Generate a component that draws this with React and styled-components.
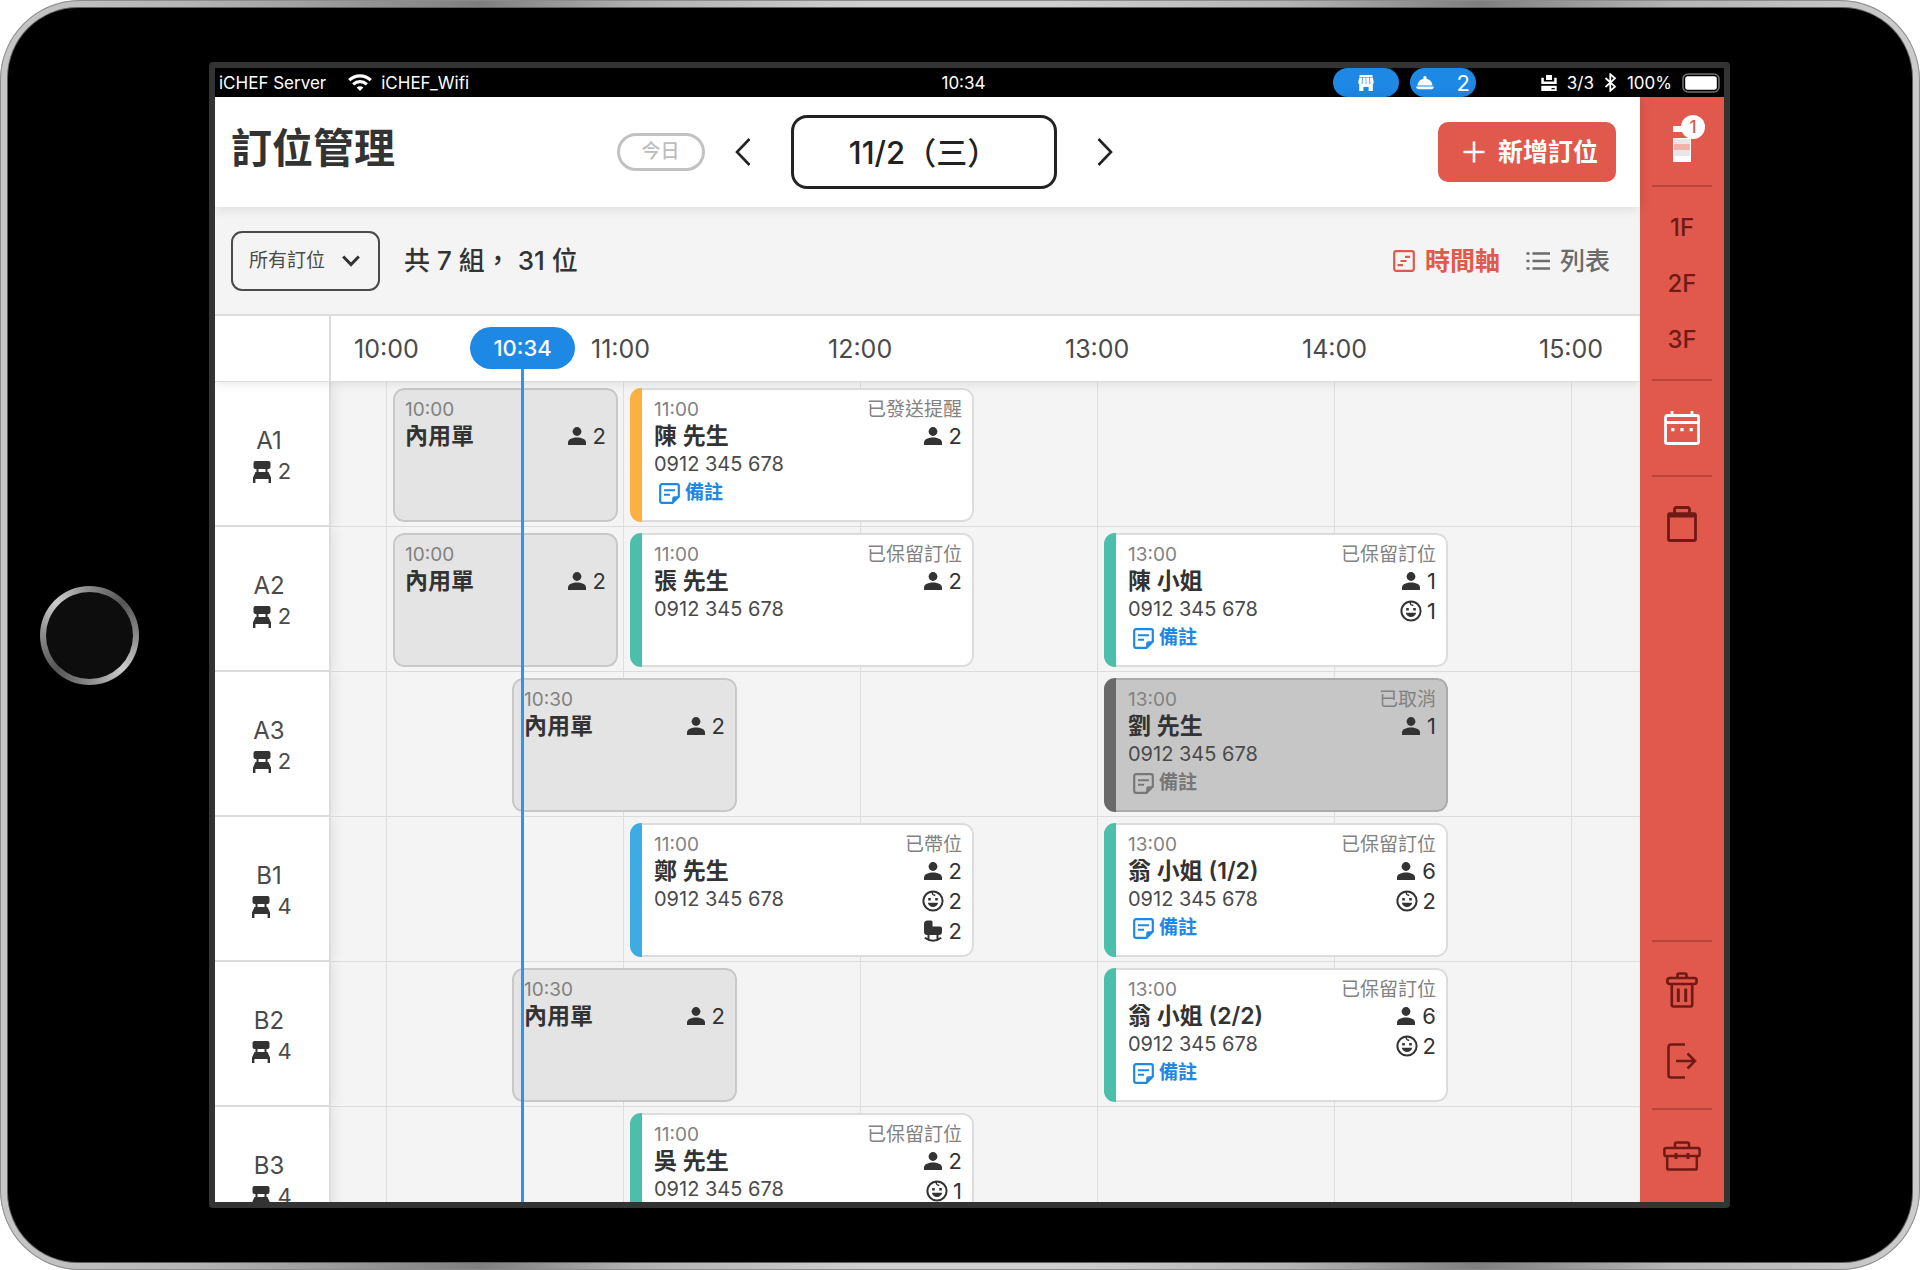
import React from "react";
import styled, { createGlobalStyle } from "styled-components";

const color = {
  ink: "#333333",
  soft: "#828282",
  line: "#dcdcdc",
  ground: "#f4f4f4",
  red: "#e1594c",
  redDark: "#701a14",
  redLine: "#b9453a",
  blue: "#1e88e5",
};

const GlobalStyle = createGlobalStyle`
  *, *::before, *::after { box-sizing: border-box; }
  body {
    margin: 0;
    background: #ffffff;
    color: ${color.ink};
    font-family: Inter, "Noto Sans CJK TC", sans-serif;
  }
  button, select { font-family: inherit; color: inherit; margin: 0; }
  button { background: none; border: 0; padding: 0; cursor: pointer; }
  h1, p { margin: 0; }
  svg { display: block; flex: none; }
`;

/* ---------- device ---------- */

const Device = styled.div`
  height: 100vh;
  padding: 8px;
  border-radius: 80px;
  background: linear-gradient(90deg, #c6c6c6 0%, #b4b4b4 10%, #7f7f7f 25%, #b0b0b0 33%, #cfcfcf 45%, #cfcfcf 55%, #b4b4b4 67%, #7f7f7f 77%, #b4b4b4 87%, #cccccc 100%);
  box-shadow: inset 0 0 0 1px #8c8c8c;
`;

const Bezel = styled.div`
  height: 100%;
  display: flex;
  align-items: center;
  padding: 54px 182px 54px 32px;
  border-radius: 70px;
  background: #000000;
  box-shadow: 0 0 0 1px #5f5f5f;
`;

const HomeSlot = styled.div`
  flex: none;
  width: 169px;
`;

const HomeButton = styled.button`
  display: block;
  width: 99px;
  height: 99px;
  border-radius: 50%;
  padding: 6px;
  background: conic-gradient(#8a8a8a, #555555 45deg, #8a8a8a 90deg, #cccccc 135deg, #8a8a8a 180deg, #555555 225deg, #8a8a8a 270deg, #cccccc 315deg, #8a8a8a);
  &::before {
    content: "";
    display: block;
    height: 100%;
    border-radius: 50%;
    background: #0d0d0d;
  }
`;

const Screen = styled.div`
  flex: 1;
  min-width: 0;
  height: 100%;
  display: flex;
  flex-direction: column;
  overflow: hidden;
  border: 6px solid #333333;
  border-radius: 4px;
  background: #000000;
`;

/* ---------- status bar ---------- */

const StatusBar = styled.div`
  flex: none;
  height: 29px;
  display: grid;
  grid-template-columns: 1fr auto 1fr;
  align-items: center;
  padding: 0 4px;
  color: #ffffff;
  font-size: 17px;
  line-height: 28px;
`;

const StatusGroup = styled.div`
  display: flex;
  align-items: center;
  height: 100%;
  gap: ${(p) => p.$gap}px;
  justify-content: ${(p) => (p.$end ? "flex-end" : "flex-start")};
`;

const Clock = styled.time`
  padding-right: 12px;
`;

const StatusPill = styled.button`
  width: 66px;
  height: 29px;
  border-radius: 15px;
  padding: 0 6px;
  display: flex;
  align-items: center;
  justify-content: ${(p) => (p.$spread ? "space-between" : "center")};
  background: ${color.blue};
  font-size: 22px;
  color: #ffffff;
`;

const StatusInfo = styled.div`
  display: flex;
  align-items: center;
  gap: 10px;
  margin-left: 54px;
`;

/* ---------- application frame ---------- */

const Workspace = styled.div`
  flex: 1;
  min-height: 0;
  display: flex;
`;

const Main = styled.main`
  flex: 1;
  min-width: 0;
  display: flex;
  flex-direction: column;
  background: ${color.ground};
`;

const Header = styled.header`
  flex: none;
  height: 110px;
  display: grid;
  grid-template-columns: 1fr auto 1fr;
  align-items: center;
  padding: 0 24px 0 16px;
  background: #ffffff;
  box-shadow: 0 1px 12px rgba(0, 0, 0, 0.12);
  z-index: 1;
`;

const TitleSide = styled.div`
  display: flex;
  align-items: center;
  justify-content: space-between;
  padding-right: 30px;
`;

const Title = styled.h1`
  font-size: 41px;
  line-height: 60px;
  font-weight: 700;
  padding-bottom: 8px;
`;

const TodayButton = styled.button`
  width: 88px;
  height: 38px;
  border: 3px solid #c2c2c2;
  border-radius: 19px;
  font-size: 19px;
  font-weight: 500;
  line-height: 32px;
  color: #bdbdbd;
`;

const DateNav = styled.div`
  display: flex;
  align-items: center;
  gap: 40px;
`;

const DateButton = styled.button`
  width: 266px;
  height: 74px;
  padding-bottom: 4px;
  border: 3px solid #222222;
  border-radius: 16px;
  font-size: 31px;
  font-weight: 500;
  color: #222222;
`;

const AddButton = styled.button`
  justify-self: end;
  height: 60px;
  padding: 0 18px 4px 25px;
  display: flex;
  align-items: center;
  gap: 13px;
  border-radius: 10px;
  background: ${color.red};
  color: #ffffff;
  font-size: 25px;
  font-weight: 700;
  svg { margin-top: 4px; }
`;

const Toolbar = styled.div`
  flex: none;
  height: 109px;
  display: flex;
  align-items: center;
  padding: 0 30px 0 16px;
  border-bottom: 2px solid ${color.line};
`;

const Filter = styled.label`
  position: relative;
  display: block;
  svg {
    position: absolute;
    right: 20px;
    top: 24px;
    pointer-events: none;
  }
`;

const FilterSelect = styled.select`
  appearance: none;
  display: block;
  width: 149px;
  height: 60px;
  padding: 0 44px 0 16px;
  border: 2px solid #4a4a4a;
  border-radius: 11px;
  background: transparent;
  font-size: 19px;
  color: #4a4a4a;
`;

const Summary = styled.p`
  margin-left: 24px;
  flex: 1;
  font-size: 26px;
  line-height: 36px;
  font-weight: 500;
`;

const Views = styled.div`
  display: flex;
  gap: 26px;
`;

const ViewButton = styled.button`
  display: flex;
  align-items: center;
  gap: 10px;
  font-size: 25px;
  line-height: 36px;
  font-weight: ${(p) => (p.$active ? 700 : 500)};
  color: ${(p) => (p.$active ? color.red : "#6b6b6b")};
`;

/* ---------- schedule ---------- */

const Schedule = styled.section`
  position: relative;
  flex: 1;
  min-height: 0;
  display: flex;
  flex-direction: column;
  overflow: hidden;
`;

const Hours = styled.div`
  flex: none;
  height: 66px;
  display: flex;
  background: #ffffff;
  border-bottom: 1px solid ${color.line};
  box-shadow: 0 1px 10px rgba(0, 0, 0, 0.1);
  z-index: 2;
`;

const HoursCorner = styled.div`
  flex: none;
  width: 116px;
  border-right: 2px solid ${color.line};
`;

const HoursTrack = styled.div`
  display: grid;
  grid-auto-flow: column;
  grid-auto-columns: 237px;
  align-items: center;
  padding-left: 23px;
  font-size: 25px;
  color: #4a4a4a;
`;

const Board = styled.div`
  flex: 1;
  min-height: 0;
  overflow: hidden;
`;

const Row = styled.div`
  height: 145px;
  display: flex;
`;

const TableCell = styled.div`
  flex: none;
  width: 116px;
  padding: 5px 6px 0 0;
  display: flex;
  flex-direction: column;
  align-items: center;
  justify-content: center;
  border-right: 2px solid ${color.line};
  border-bottom: 2px solid ${color.line};
  background: #ffffff;
  box-shadow: 1px 0 14px rgba(0, 0, 0, 0.1);
  clip-path: inset(0 -20px 0 0);
  font-size: 24px;
  line-height: 31px;
  color: #4a4a4a;
`;

const Seats = styled.div`
  display: flex;
  align-items: center;
  gap: 7px;
  padding-left: 6px;
  font-size: 22px;
`;

const Lane = styled.div`
  flex: 1;
  min-width: 0;
  overflow: hidden;
  display: grid;
  grid-template-columns: 55px repeat(10, 119px 118px);
  padding: 6px 0 4px;
  border-bottom: 1px solid ${color.line};
  background: linear-gradient(90deg, #dedede 1px, transparent 1px) 55px 0 / 237px 100%;
`;

const Card = styled.article`
  grid-row: 1;
  grid-column: ${(p) => p.$from} / span ${(p) => p.$span};
  margin: 0 5px 0 7px;
  height: 134px;
  display: flex;
  overflow: hidden;
  border-radius: 11px;
`;

const Accent = styled.div`
  flex: none;
  width: 12px;
  background: ${(p) => p.$color};
`;

const CardBody = styled.div`
  flex: 1;
  min-width: 0;
  display: flex;
  justify-content: space-between;
  padding: 6px 10px 0;
  border: 2px solid ${(p) => p.$edge};
  ${(p) => p.$accented && "border-left: 0; padding-left: 12px;"}
  border-radius: ${(p) => (p.$accented ? "0 11px 11px 0" : "11px")};
  background: ${(p) => p.$fill};
`;

const Column = styled.div`
  display: flex;
  flex-direction: column;
  align-items: ${(p) => (p.$end ? "flex-end" : "flex-start")};
  white-space: nowrap;
`;

const Start = styled.time`
  font-size: 19px;
  line-height: 27px;
  color: ${color.soft};
`;

const Status = styled.span`
  height: 25px;
  font-size: 19px;
  line-height: 27px;
  color: ${color.soft};
`;

const Guest = styled.span`
  font-size: 23px;
  line-height: 26px;
  font-weight: 600;
`;

const Phone = styled.span`
  font-size: 20px;
  line-height: 31px;
  color: #4a4a4a;
`;

const Note = styled.button`
  display: flex;
  align-items: center;
  gap: 5px;
  margin-left: 5px;
  font-size: 19px;
  line-height: 26px;
  font-weight: 700;
  color: ${(p) => (p.$muted ? "#777777" : color.blue)};
`;

const Count = styled.span`
  display: flex;
  align-items: center;
  gap: 5px;
  font-size: 22px;
  line-height: 30px;
`;

const NowMarker = styled.div`
  position: absolute;
  top: 11px;
  bottom: 0;
  left: 255px;
  width: 105px;
  display: flex;
  flex-direction: column;
  align-items: center;
  pointer-events: none;
  z-index: 3;
  &::after {
    content: "";
    flex: 1;
    width: 3px;
    background: #2f95ec;
  }
`;

const NowPill = styled.time`
  align-self: stretch;
  border-radius: 21px;
  background: ${color.blue};
  color: #ffffff;
  text-align: center;
  font-size: 22px;
  line-height: 42px;
  font-weight: 500;
`;

/* ---------- side rail ---------- */

const Rail = styled.nav`
  flex: none;
  width: 84px;
  display: flex;
  flex-direction: column;
  align-items: center;
  background: ${color.red};
`;

const RailSection = styled.div`
  width: 60px;
  display: flex;
  flex-direction: column;
  align-items: center;
  padding: ${(p) => p.$pad || 0}px 0;
  margin-top: ${(p) => (p.$push ? "auto" : 0)};
  border-top: ${(p) => (p.$line ? `2px solid ${color.redLine}` : "0")};
`;

const RailButton = styled.button`
  width: 60px;
  height: ${(p) => p.$height}px;
  display: flex;
  align-items: center;
  justify-content: center;
  color: ${(p) => (p.$active ? "#ffffff" : color.redDark)};
  font-size: 24px;
  font-weight: 500;
`;

const BadgeHost = styled.span`
  position: relative;
  display: block;
`;

const Badge = styled.span`
  position: absolute;
  top: -5px;
  left: 8px;
  width: 24px;
  height: 24px;
  border-radius: 50%;
  background: #ffffff;
  color: ${color.red};
  font-size: 17px;
  line-height: 24px;
  text-align: center;
`;

/* ---------- icons ---------- */

const Wifi = () => (
  <svg width="24" height="17" viewBox="0 0 24 17" fill="none" stroke="#fff" strokeWidth="3.2">
    <path d="M1.2 6.2C7.3.4 16.7.4 22.8 6.2" />
    <path d="M5.2 10.4c3.9-3.6 9.7-3.6 13.6 0" />
    <path d="M12 17l-3.4-3.6c1.9-1.7 4.9-1.7 6.8 0z" fill="#fff" stroke="none" />
  </svg>
);

const Store = () => (
  <svg width="16" height="16" viewBox="0 0 16 16" fill="#fff">
    <path d="M1.5 0h13v2h-13z" />
    <path d="M1.2 2.6h3L3.8 7.4a1.7 1.7 0 0 1-3.6 0zM4.9 2.6h2.8v4.8a1.6 1.6 0 0 1-3.2 0zM8.3 2.6h2.8l.4 4.8a1.6 1.6 0 0 1-3.2 0zM11.8 2.6h3l1 4.8a1.7 1.7 0 0 1-3.6 0z" />
    <path d="M1.2 8.500h13.600V16h-4.200v-4H5.400v4H1.200z" />
  </svg>
);

const Dish = () => (
  <svg width="18" height="14" viewBox="0 0 18 14" fill="#fff">
    <circle cx="9" cy="1.7" r="1.7" />
    <path d="M1.5 9.6C1.8 5.500 5 2.800 9 2.800s7.200 2.700 7.500 6.800zM.2 10.600h17.600c0 1.700-1 2.700-2.600 2.700H2.800C1.200 13.300.2 12.300.2 10.600z" />
  </svg>
);

const Printer = () => (
  <svg width="16" height="16" viewBox="0 0 16 16" fill="#fff">
    <path d="M5 0h6v5H5z" />
    <path d="M.3 2.800h2.500v3.700h10.400V2.800h2.500V9H.3z" />
    <path d="M.3 10.800h15.400V16H.3zM10.500 13v1.200h3.200V13z" fillRule="evenodd" />
  </svg>
);

const Bluetooth = () => (
  <svg width="13" height="19" viewBox="0 0 13 19" fill="none" stroke="#fff" strokeWidth="1.8">
    <path d="M1.500 5l9.500 8.700-4.700 4V1.300l4.700 4L1.500 14" />
  </svg>
);

const Battery = () => (
  <svg width="38" height="20" viewBox="0 0 38 20">
    <rect x="1" y="1" width="36" height="18" rx="5" fill="#000" stroke="#6f6f6f" strokeWidth="1.600" />
    <rect x="3.200" y="3.200" width="31.600" height="13.600" rx="2.500" fill="#fff" />
  </svg>
);

const Arrow = ({ flip }) => (
  <svg width="16" height="28" viewBox="0 0 16 28" fill="none" stroke="#222" strokeWidth="2.600">
    <path d={flip ? "M1.500 1l12.500 13-12.500 13" : "M14.500 1L2 14l12.500 13"} />
  </svg>
);

const Plus = () => (
  <svg width="22" height="22" viewBox="0 0 22 22" stroke="#fff" strokeWidth="2.600">
    <path d="M11 .5v21M.5 11h21" />
  </svg>
);

const Caret = () => (
  <svg width="18" height="12" viewBox="0 0 18 12" fill="none" stroke="#333" strokeWidth="3">
    <path d="M1.200 1.500L9 9.500l7.800-8" />
  </svg>
);

const TimelineIcon = () => (
  <svg width="22" height="22" viewBox="0 0 22 22" fill="none" stroke="currentColor" strokeWidth="2.200">
    <rect x="1.200" y="1.200" width="19.600" height="19.600" rx="2" />
    <path d="M12 6.800h5M7.500 11h6M4.500 15.200h5.500" />
  </svg>
);

const ListIcon = () => (
  <svg width="24" height="20" viewBox="0 0 24 20" stroke="currentColor" strokeWidth="2.400">
    <path d="M6.500 2.500H24M6.500 10H24M6.500 17.500H24M.5 2.500h3M.5 10h3M.5 17.500h3" />
  </svg>
);

const Chair = () => (
  <svg width="18" height="22" viewBox="0 0 18 22" fill={color.ink}>
    <path d="M2.500 0h13A2 2 0 0 1 17.500 2v4A2 2 0 0 1 15.500 8h-13A2 2 0 0 1 .5 6V2A2 2 0 0 1 2.500 0z" />
    <path d="M3.500 7.500h2V12h-2zM12.500 7.500h2V12h-2z" />
    <path d="M2.500 11h13l2.500 5.500V22h-2.400v-4H2.400v4H0v-5.500z" />
  </svg>
);

const Person = () => (
  <svg width="22" height="22" viewBox="0 0 22 22" fill={color.ink}>
    <circle cx="11" cy="6.500" r="4.400" />
    <path d="M2 20v-2.600c0-3.400 5-4.900 9-4.900s9 1.500 9 4.900V20z" />
  </svg>
);

const Child = () => (
  <svg width="22" height="22" viewBox="0 0 22 22" fill="none" stroke={color.ink} strokeWidth="2">
    <circle cx="11" cy="11" r="9.600" />
    <path d="M10.500 1.500c-.8 2.400.6 4 2.800 3.600" strokeWidth="1.500" />
    <path d="M6.200 9.200h2.600M13.200 9.200h2.600" strokeWidth="2.400" />
    <path d="M5.800 12.800h10.400c-.6 2.700-2.600 4.200-5.200 4.200s-4.600-1.500-5.200-4.200z" fill={color.ink} stroke="none" />
  </svg>
);

const Pram = () => (
  <svg width="22" height="22" viewBox="0 0 22 22" fill={color.ink}>
    <path d="M2 4a3.500 3.500 0 0 1 3.500-3.500H9A1.500 1.500 0 0 1 10.500 2v4.500H18A2 2 0 0 1 20 8.500V12a3 3 0 0 1-3 3H5a3 3 0 0 1-3-3z" />
    <path d="M6.500 14v5M15.500 14v5M2.800 17.800c4.800 3.800 11.600 3.800 16.400 0" fill="none" stroke={color.ink} strokeWidth="2" />
  </svg>
);

const NoteIcon = () => (
  <svg width="21" height="21" viewBox="0 0 21 21" fill="none" stroke="currentColor" strokeWidth="2.200">
    <path d="M3 1.200h15a1.800 1.800 0 0 1 1.800 1.800v10.500l-6.300 6.300H3A1.800 1.800 0 0 1 1.200 18V3A1.800 1.800 0 0 1 3 1.200z" />
    <path d="M13.200 20v-4.500a2.300 2.300 0 0 1 2.300-2.300H20z" fill="currentColor" stroke="none" />
    <path d="M5 7.300h11M5 11.800h6" strokeWidth="2" />
  </svg>
);

const Bottle = () => (
  <svg width="18" height="42" viewBox="0 0 18 42">
    <path d="M0 6h18v6H0zM0 18h18v24H0z" fill="#fff" />
    <path d="M1 19h16v17H1z" fill="#e8e6e6" />
    <path d="M1 24h16v6H1z" fill="#efb3ab" />
  </svg>
);

const CalendarIcon = () => (
  <svg width="36" height="34" viewBox="0 0 36 34" fill="none" stroke="currentColor" strokeWidth="2.800">
    <rect x="1.500" y="4.500" width="33" height="28" rx="1.800" />
    <path d="M1.500 11.500h33M8 0v5M28 0v5" />
    <path d="M7.200 18.600h3.200M16.400 18.600h3.200M25.600 18.600h3.200" strokeWidth="3.200" />
  </svg>
);

const Bag = () => (
  <svg width="30" height="36" viewBox="0 0 30 36" fill="none" stroke="currentColor" strokeWidth="2.800">
    <path d="M7.500 7V3.200a1.700 1.700 0 0 1 1.700-1.700h11.600a1.700 1.700 0 0 1 1.700 1.700V7" />
    <rect x="1.500" y="8" width="27" height="26.500" rx="1" />
    <path d="M1.500 9h27" strokeWidth="5" />
  </svg>
);

const Trash = () => (
  <svg width="32" height="36" viewBox="0 0 32 36" fill="none" stroke="currentColor" strokeWidth="2.700">
    <rect x="1.400" y="6" width="29.200" height="6" rx="2.400" />
    <path d="M11.500 6V3a1.500 1.500 0 0 1 1.500-1.500h6A1.500 1.500 0 0 1 20.500 3v3" />
    <path d="M5.800 12v20.800A1.700 1.700 0 0 0 7.500 34.500h17a1.700 1.700 0 0 0 1.700-1.700V12" />
    <path d="M12.300 16.500V30M19.700 16.500V30" strokeWidth="3" />
  </svg>
);

const Exit = () => (
  <svg width="30" height="36" viewBox="0 0 30 36" fill="none" stroke="currentColor" strokeWidth="2.500">
    <path d="M18 1.500H4A2.500 2.500 0 0 0 1.500 4v28A2.500 2.500 0 0 0 4 34.500h14" />
    <path d="M9 18h19M20.500 10.500L28 18l-7.500 7.500" />
  </svg>
);

const Toolbox = () => (
  <svg width="38" height="30" viewBox="0 0 38 30" fill="none" stroke="currentColor" strokeWidth="2.500">
    <path d="M12 7V3a1.600 1.600 0 0 1 1.600-1.600h10.800A1.600 1.600 0 0 1 26 3v4" />
    <rect x="1.400" y="7" width="35.200" height="8" rx="1.600" />
    <path d="M4.200 15v12a1.600 1.600 0 0 0 1.600 1.600h26.400a1.600 1.600 0 0 0 1.600-1.600V15" />
    <path d="M13 12v6M25 12v6" strokeWidth="3" />
  </svg>
);

/* ---------- data ---------- */

const KINDS = {
  dineIn: { fill: "#e4e4e4", edge: "#c8c8c8" },
  reminded: { accent: "#fbb042", status: "已發送提醒", fill: "#ffffff", edge: color.line },
  reserved: { accent: "#4bbfa9", status: "已保留訂位", fill: "#ffffff", edge: color.line },
  seated: { accent: "#3fabe3", status: "已帶位", fill: "#ffffff", edge: color.line },
  cancelled: { accent: "#6a6a6a", status: "已取消", fill: "#c6c6c6", edge: "#ababab" },
};

const PHONE = "0912 345 678";

const TABLES = [
  { name: "A1", seats: 2, cards: [
    { kind: "dineIn", time: "10:00", guest: "內用單", people: 2 },
    { kind: "reminded", time: "11:00", guest: "陳 先生", phone: PHONE, note: true, people: 2 },
  ] },
  { name: "A2", seats: 2, cards: [
    { kind: "dineIn", time: "10:00", guest: "內用單", people: 2 },
    { kind: "reserved", time: "11:00", guest: "張 先生", phone: PHONE, people: 2 },
    { kind: "reserved", time: "13:00", guest: "陳 小姐", phone: PHONE, note: true, people: 1, children: 1 },
  ] },
  { name: "A3", seats: 2, cards: [
    { kind: "dineIn", time: "10:30", guest: "內用單", people: 2 },
    { kind: "cancelled", time: "13:00", guest: "劉 先生", phone: PHONE, note: true, people: 1 },
  ] },
  { name: "B1", seats: 4, cards: [
    { kind: "seated", time: "11:00", guest: "鄭 先生", phone: PHONE, people: 2, children: 2, prams: 2 },
    { kind: "reserved", time: "13:00", guest: "翁 小姐 (1/2)", phone: PHONE, note: true, people: 6, children: 2 },
  ] },
  { name: "B2", seats: 4, cards: [
    { kind: "dineIn", time: "10:30", guest: "內用單", people: 2 },
    { kind: "reserved", time: "13:00", guest: "翁 小姐 (2/2)", phone: PHONE, note: true, people: 6, children: 2 },
  ] },
  { name: "B3", seats: 4, cards: [
    { kind: "reserved", time: "11:00", guest: "吳 先生", phone: PHONE, people: 2, children: 1 },
  ] },
];

const HOURS = ["10:00", "11:00", "12:00", "13:00", "14:00", "15:00"];

// Lanes are divided into half hours; the first grid column is the lead-in before 10:00.
const halfHourColumn = (time) => {
  const [h, m] = time.split(":").map(Number);
  return 2 + (h - 10) * 2 + m / 30;
};

function Booking({ kind, time, guest, phone, note, people, children, prams }) {
  const k = KINDS[kind];
  const accented = Boolean(k.accent);
  return (
    <Card $from={halfHourColumn(time)} $span={accented ? 3 : 2}>
      {accented && <Accent $color={k.accent} />}
      <CardBody $accented={accented} $fill={k.fill} $edge={k.edge}>
        <Column>
          <Start>{time}</Start>
          <Guest>{guest}</Guest>
          {phone && <Phone>{phone}</Phone>}
          {note && <Note type="button" $muted={kind === "cancelled"}><NoteIcon />備註</Note>}
        </Column>
        <Column $end>
          <Status>{k.status}</Status>
          <Count><Person />{people}</Count>
          {children && <Count><Child />{children}</Count>}
          {prams && <Count><Pram />{prams}</Count>}
        </Column>
      </CardBody>
    </Card>
  );
}

export default function App() {
  return (
    <Device lang="zh-Hant">
      <GlobalStyle />
      <Bezel>
        <HomeSlot>
          <HomeButton type="button" aria-label="Home" />
        </HomeSlot>
        <Screen>
          <StatusBar>
            <StatusGroup $gap={22}>
              <span>iCHEF Server</span>
              <StatusGroup $gap={9}><Wifi /><span>iCHEF_Wifi</span></StatusGroup>
            </StatusGroup>
            <Clock>10:34</Clock>
            <StatusGroup $gap={11} $end>
              <StatusPill type="button" aria-label="店面"><Store /></StatusPill>
              <StatusPill type="button" $spread><Dish />2</StatusPill>
              <StatusInfo>
                <Printer /><span>3/3</span>
                <Bluetooth /><span>100%</span>
                <Battery />
              </StatusInfo>
            </StatusGroup>
          </StatusBar>
          <Workspace>
            <Main>
              <Header>
                <TitleSide>
                  <Title>訂位管理</Title>
                  <TodayButton type="button">今日</TodayButton>
                </TitleSide>
                <DateNav>
                  <button type="button" aria-label="前一天"><Arrow /></button>
                  <DateButton type="button">11/2（三）</DateButton>
                  <button type="button" aria-label="後一天"><Arrow flip /></button>
                </DateNav>
                <AddButton type="button"><Plus />新增訂位</AddButton>
              </Header>
              <Toolbar>
                <Filter>
                  <FilterSelect aria-label="訂位篩選" defaultValue="all">
                    <option value="all">所有訂位</option>
                  </FilterSelect>
                  <Caret />
                </Filter>
                <Summary>共 7 組， 31 位</Summary>
                <Views>
                  <ViewButton type="button" $active><TimelineIcon />時間軸</ViewButton>
                  <ViewButton type="button"><ListIcon />列表</ViewButton>
                </Views>
              </Toolbar>
              <Schedule>
                <Hours>
                  <HoursCorner />
                  <HoursTrack>
                    {HOURS.map((h) => <time key={h}>{h}</time>)}
                  </HoursTrack>
                </Hours>
                <Board>
                  {TABLES.map((t) => (
                    <Row key={t.name}>
                      <TableCell>
                        <span>{t.name}</span>
                        <Seats><Chair />{t.seats}</Seats>
                      </TableCell>
                      <Lane>
                        {t.cards.map((c) => <Booking key={c.time} {...c} />)}
                      </Lane>
                    </Row>
                  ))}
                </Board>
                <NowMarker><NowPill>10:34</NowPill></NowMarker>
              </Schedule>
            </Main>
            <Rail>
              <RailSection>
                <RailButton type="button" $height={88} $active aria-label="點餐">
                  <BadgeHost><Bottle /><Badge>1</Badge></BadgeHost>
                </RailButton>
              </RailSection>
              <RailSection $line $pad={12}>
                <RailButton type="button" $height={56}>1F</RailButton>
                <RailButton type="button" $height={56}>2F</RailButton>
                <RailButton type="button" $height={56}>3F</RailButton>
              </RailSection>
              <RailSection $line>
                <RailButton type="button" $height={94} $active aria-label="訂位"><CalendarIcon /></RailButton>
              </RailSection>
              <RailSection $line>
                <RailButton type="button" $height={94} aria-label="外帶"><Bag /></RailButton>
              </RailSection>
              <RailSection $line $push $pad={12}>
                <RailButton type="button" $height={71} aria-label="刪除"><Trash /></RailButton>
                <RailButton type="button" $height={71} aria-label="離開"><Exit /></RailButton>
              </RailSection>
              <RailSection $line>
                <RailButton type="button" $height={92} aria-label="工具"><Toolbox /></RailButton>
              </RailSection>
            </Rail>
          </Workspace>
        </Screen>
      </Bezel>
    </Device>
  );
}
